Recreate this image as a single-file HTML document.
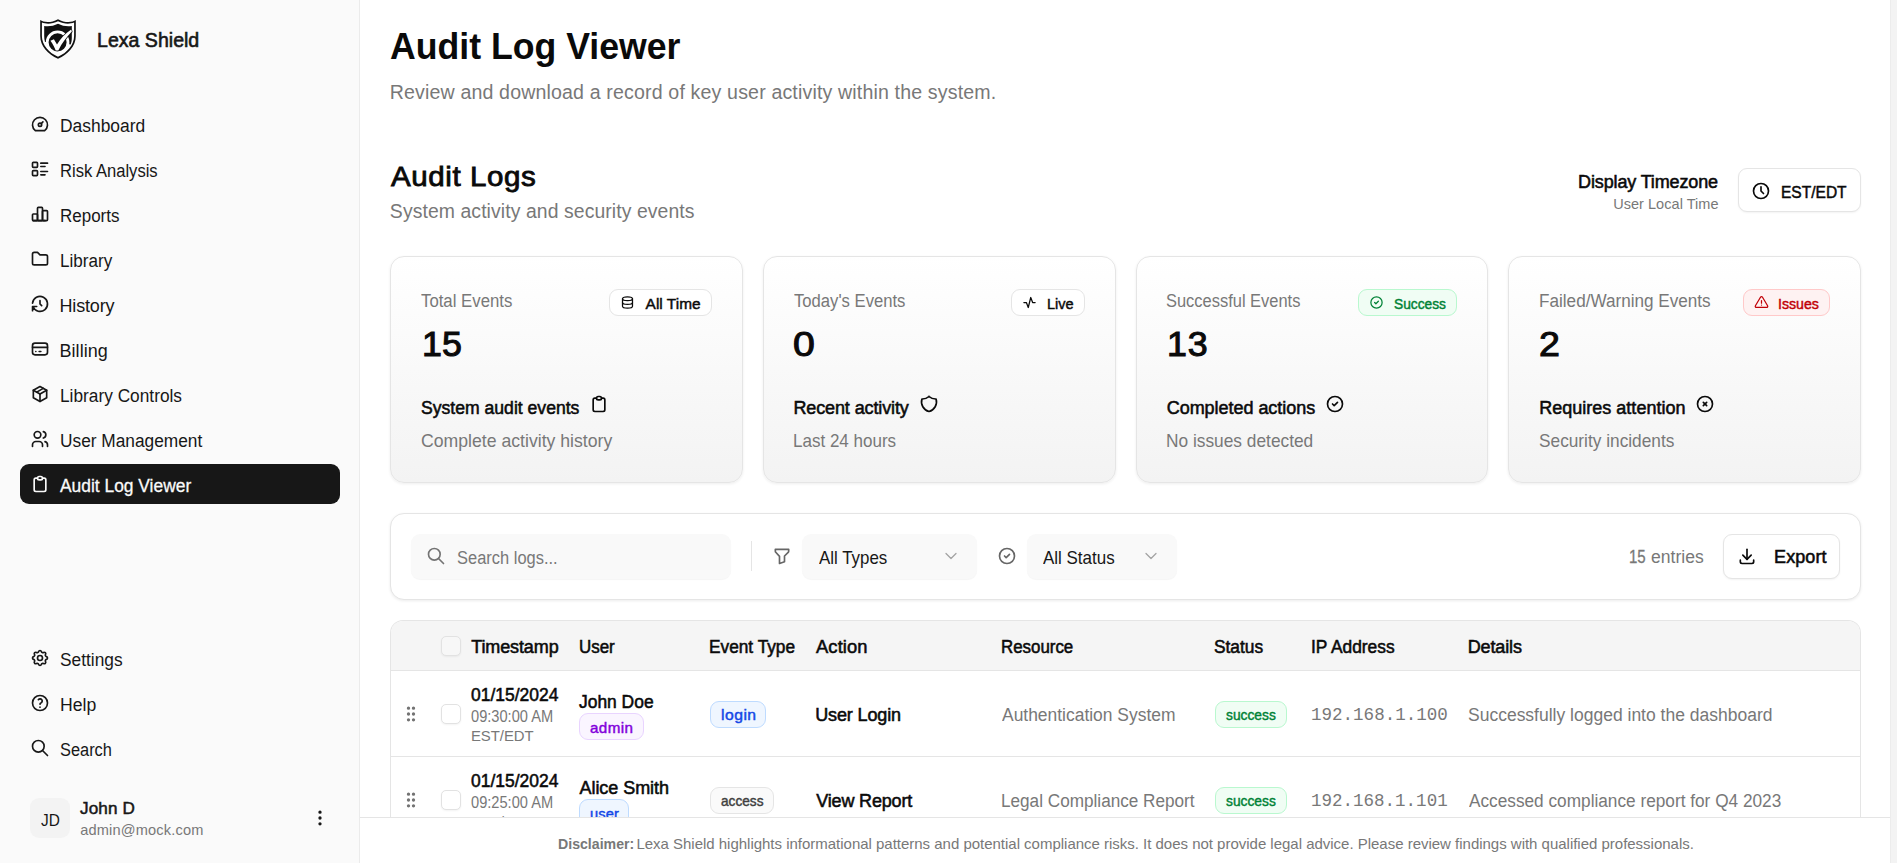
<!DOCTYPE html>
<html lang="en"><head><meta charset="utf-8"><title>Audit Log Viewer - Lexa Shield</title>
<style>
html,body{margin:0;padding:0;width:1897px;height:863px;overflow:hidden}
body{width:1897px;height:863px;overflow:hidden;background:#fff;position:relative;font-family:"Liberation Sans",sans-serif}
.bx{position:absolute;box-sizing:border-box}
.ic{position:absolute;overflow:visible}
.t{position:absolute;white-space:nowrap;transform-origin:0 0}
.side{background:#fafafa;border-right:1px solid #ebebeb;width:360px !important}
.active{background:#171717;border-radius:9px}
.avatar{background:#f3f3f3;border-radius:9px}
.btn{background:#fff;border:1px solid #e5e5e5;border-radius:9px;box-shadow:0 1px 2px rgba(0,0,0,.05)}
.card{border:1px solid #e5e5e5;border-radius:14px;background:linear-gradient(180deg,#ffffff 0%,#f3f3f3 100%);box-shadow:0 1px 3px rgba(0,0,0,.07)}
.badge{background:#fff;border:1px solid #e5e5e5;border-radius:9px}
.panel{background:#fff;border:1px solid #e5e5e5;border-radius:14px;box-shadow:0 1px 3px rgba(0,0,0,.08)}
.input{background:#f9f9f9;border-radius:9px;box-shadow:0 1px 1px rgba(0,0,0,.04)}
.table{border:1px solid #e5e5e5;border-bottom:0;border-radius:13px 13px 0 0;overflow:hidden;background:#fff}
.thead{position:absolute;left:0;top:0;right:0;background:#f5f5f5;border-bottom:1px solid #e5e5e5}
.trow{position:absolute;left:0;right:0;height:1px;background:#e5e5e5}
.cb{background:#fff;border:1px solid #e2e2e2;border-radius:5px;box-shadow:0 1px 2px rgba(0,0,0,.05)}
.foot{background:#fff;border-top:1px solid #e5e5e5}
</style></head>
<body>
<aside class="bx side" style="left:0;top:0;width:359px;height:863px"></aside>
<svg class="ic" style="left:40px;top:19px;width:36px;height:40px" viewBox="0 0 36 40">
<path d="M0.2 1.1 C3.5 3.4 11 4.2 18 0.2 C25 4.2 32.5 3.4 35.8 1.1 L35.8 17 C35.8 27 28 35.5 18 39.8 C8 35.5 0.2 27 0.2 17 Z" fill="#111"/>
<path d="M1.9 3.6 C6 5.3 12.5 5.2 18 2.3 C23.5 5.2 30 5.3 34.1 3.6 L34.1 17 C34.1 26 27 33.8 18 37.8 C9 33.8 1.9 26 1.9 17 Z" fill="#fff"/>
<path d="M4.2 6.9 C8.5 7.6 13.5 7 18 4.7 C22.5 7 27.5 7.6 31.8 6.9 L31.8 19 C31.8 21.5 31.4 23.6 30.6 25.6 L17.6 23.3 L5 23 C4.4 21 4.2 19 4.2 17 Z" fill="#111"/>
<circle cx="17.6" cy="23.3" r="10" fill="#111"/>
<circle cx="17.6" cy="23.3" r="10.4" fill="none" stroke="#fff" stroke-width="2.8"/>
<path d="M10.4 21.7 L13.9 20.3 L17.0 25.6 C20.5 19.6 25.2 14.6 31.2 10.6 L31.8 12.6 C26.6 17.9 22.0 24.1 18.3 31.5 L15.7 31.5 C14.4 27.9 12.7 24.7 10.4 21.7 Z" fill="#fff" stroke="#111" stroke-width="1.5" paint-order="stroke" stroke-linejoin="round"/>
</svg>
<svg class="ic" style="left:30.00px;top:113.80px;width:20px;height:20px;color:#171717;" viewBox="0 0 24 24" fill="none" stroke="currentColor" stroke-width="2" stroke-linecap="round" stroke-linejoin="round"><path d="M12 13m-2 0a2 2 0 1 0 4 0a2 2 0 1 0 -4 0"/><path d="M13.45 11.55l2.05 -2.05"/><path d="M6.4 20a9 9 0 1 1 11.2 0z"/></svg>
<svg class="ic" style="left:30.00px;top:158.80px;width:20px;height:20px;color:#171717;" viewBox="0 0 24 24" fill="none" stroke="currentColor" stroke-width="2" stroke-linecap="round" stroke-linejoin="round"><path d="M13 5h8"/><path d="M13 9h5"/><path d="M13 15h8"/><path d="M13 19h5"/><path d="M3 5a1 1 0 0 1 1 -1h4a1 1 0 0 1 1 1v4a1 1 0 0 1 -1 1h-4a1 1 0 0 1 -1 -1z"/><path d="M3 15a1 1 0 0 1 1 -1h4a1 1 0 0 1 1 1v4a1 1 0 0 1 -1 1h-4a1 1 0 0 1 -1 -1z"/></svg>
<svg class="ic" style="left:30.00px;top:203.80px;width:20px;height:20px;color:#171717;" viewBox="0 0 24 24" fill="none" stroke="currentColor" stroke-width="2" stroke-linecap="round" stroke-linejoin="round"><path d="M3 13a1 1 0 0 1 1 -1h4a1 1 0 0 1 1 1v6a1 1 0 0 1 -1 1h-4a1 1 0 0 1 -1 -1z"/><path d="M15 9a1 1 0 0 1 1 -1h4a1 1 0 0 1 1 1v10a1 1 0 0 1 -1 1h-4a1 1 0 0 1 -1 -1z"/><path d="M9 5a1 1 0 0 1 1 -1h4a1 1 0 0 1 1 1v14a1 1 0 0 1 -1 1h-4a1 1 0 0 1 -1 -1z"/><path d="M4 20h14"/></svg>
<svg class="ic" style="left:30.00px;top:248.80px;width:20px;height:20px;color:#171717;" viewBox="0 0 24 24" fill="none" stroke="currentColor" stroke-width="2" stroke-linecap="round" stroke-linejoin="round"><path d="M5 4h4l3 3h7a2 2 0 0 1 2 2v8a2 2 0 0 1 -2 2h-14a2 2 0 0 1 -2 -2v-11a2 2 0 0 1 2 -2"/></svg>
<svg class="ic" style="left:30.00px;top:293.80px;width:20px;height:20px;color:#171717;" viewBox="0 0 24 24" fill="none" stroke="currentColor" stroke-width="2" stroke-linecap="round" stroke-linejoin="round"><path d="M12 8l0 4l2 2"/><path d="M3.05 11a9 9 0 1 1 .5 4m-.5 5v-5h5"/></svg>
<svg class="ic" style="left:30.00px;top:338.80px;width:20px;height:20px;color:#171717;" viewBox="0 0 24 24" fill="none" stroke="currentColor" stroke-width="2" stroke-linecap="round" stroke-linejoin="round"><path d="M3 8a3 3 0 0 1 3 -3h12a3 3 0 0 1 3 3v8a3 3 0 0 1 -3 3h-12a3 3 0 0 1 -3 -3z"/><path d="M3 10l18 0"/><path d="M7 15l.01 0"/><path d="M11 15l2 0"/></svg>
<svg class="ic" style="left:30.00px;top:383.80px;width:20px;height:20px;color:#171717;" viewBox="0 0 24 24" fill="none" stroke="currentColor" stroke-width="2" stroke-linecap="round" stroke-linejoin="round"><path d="M12 3l8 4.5l0 9l-8 4.5l-8 -4.5l0 -9l8 -4.5"/><path d="M12 12l8 -4.5"/><path d="M12 12l0 9"/><path d="M12 12l-8 -4.5"/><path d="M16 5.25l-8 4.5"/></svg>
<svg class="ic" style="left:30.00px;top:428.80px;width:20px;height:20px;color:#171717;" viewBox="0 0 24 24" fill="none" stroke="currentColor" stroke-width="2" stroke-linecap="round" stroke-linejoin="round"><path d="M9 7m-4 0a4 4 0 1 0 8 0a4 4 0 1 0 -8 0"/><path d="M3 21v-2a4 4 0 0 1 4 -4h4a4 4 0 0 1 4 4v2"/><path d="M16 3.13a4 4 0 0 1 0 7.75"/><path d="M21 21v-2a4 4 0 0 0 -3 -3.85"/></svg>
<div class="bx active" style="left:20px;top:464px;width:320px;height:40px;"></div>
<svg class="ic" style="left:30.00px;top:473.80px;width:20px;height:20px;color:#fafafa;" viewBox="0 0 24 24" fill="none" stroke="currentColor" stroke-width="2" stroke-linecap="round" stroke-linejoin="round"><path d="M9 5h-2a2 2 0 0 0 -2 2v12a2 2 0 0 0 2 2h10a2 2 0 0 0 2 -2v-12a2 2 0 0 0 -2 -2h-2"/><path d="M9 5a2 2 0 0 1 2 -2h2a2 2 0 0 1 2 2v0a2 2 0 0 1 -2 2h-2a2 2 0 0 1 -2 -2z"/></svg>
<svg class="ic" style="left:30.00px;top:647.80px;width:20px;height:20px;color:#171717;" viewBox="0 0 24 24" fill="none" stroke="currentColor" stroke-width="2" stroke-linecap="round" stroke-linejoin="round"><path d="M10.325 4.317c.426 -1.756 2.924 -1.756 3.35 0a1.724 1.724 0 0 0 2.573 1.066c1.543 -.94 3.31 .826 2.37 2.37a1.724 1.724 0 0 0 1.065 2.572c1.756 .426 1.756 2.924 0 3.35a1.724 1.724 0 0 0 -1.066 2.573c.94 1.543 -.826 3.31 -2.37 2.37a1.724 1.724 0 0 0 -2.572 1.065c-.426 1.756 -2.924 1.756 -3.35 0a1.724 1.724 0 0 0 -2.573 -1.066c-1.543 .94 -3.31 -.826 -2.37 -2.37a1.724 1.724 0 0 0 -1.065 -2.572c-1.756 -.426 -1.756 -2.924 0 -3.35a1.724 1.724 0 0 0 1.066 -2.573c-.94 -1.543 .826 -3.31 2.37 -2.37c1 .608 2.296 .07 2.572 -1.065z"/><path d="M9 12a3 3 0 1 0 6 0a3 3 0 0 0 -6 0"/></svg>
<svg class="ic" style="left:30.00px;top:692.80px;width:20px;height:20px;color:#171717;" viewBox="0 0 24 24" fill="none" stroke="currentColor" stroke-width="2" stroke-linecap="round" stroke-linejoin="round"><path d="M3 12a9 9 0 1 0 18 0a9 9 0 1 0 -18 0"/><path d="M12 17l0 .01"/><path d="M12 13.5a1.5 1.5 0 0 1 1 -1.5a2.6 2.6 0 1 0 -3 -4"/></svg>
<svg class="ic" style="left:30.00px;top:737.80px;width:20px;height:20px;color:#171717;" viewBox="0 0 24 24" fill="none" stroke="currentColor" stroke-width="2" stroke-linecap="round" stroke-linejoin="round"><path d="M10 10m-7 0a7 7 0 1 0 14 0a7 7 0 1 0 -14 0"/><path d="M21 21l-6 -6"/></svg>
<div class="bx avatar" style="left:30px;top:798px;width:40px;height:40px;"></div>
<svg class="ic" style="left:309.50px;top:808.20px;width:20px;height:20px;color:#171717;" viewBox="0 0 24 24" fill="none" stroke="currentColor" stroke-width="2" stroke-linecap="round" stroke-linejoin="round"><path d="M12 12m-1 0a1 1 0 1 0 2 0a1 1 0 1 0 -2 0"/><path d="M12 19m-1 0a1 1 0 1 0 2 0a1 1 0 1 0 -2 0"/><path d="M12 5m-1 0a1 1 0 1 0 2 0a1 1 0 1 0 -2 0"/></svg>
<div class="bx btn" style="left:1738px;top:168px;width:123px;height:44px;"></div>
<svg class="ic" style="left:1751.00px;top:180.70px;width:20px;height:20px;color:#0a0a0a;" viewBox="0 0 24 24" fill="none" stroke="currentColor" stroke-width="2" stroke-linecap="round" stroke-linejoin="round"><path d="M3 12a9 9 0 1 0 18 0a9 9 0 0 0 -18 0"/><path d="M12 7v5l3 3"/></svg>
<div class="bx card" style="left:390px;top:256px;width:353px;height:227px;"></div>
<div class="bx card" style="left:763px;top:256px;width:353px;height:227px;"></div>
<div class="bx card" style="left:1136px;top:256px;width:352px;height:227px;"></div>
<div class="bx card" style="left:1508px;top:256px;width:353px;height:227px;"></div>
<div class="bx badge" style="left:609px;top:289px;width:103px;height:27px;"></div>
<svg class="ic" style="left:620.00px;top:294.90px;width:15px;height:15px;color:#0a0a0a;" viewBox="0 0 24 24" fill="none" stroke="currentColor" stroke-width="2" stroke-linecap="round" stroke-linejoin="round"><path d="M4 6a8 3 0 1 0 16 0a8 3 0 1 0 -16 0"/><path d="M4 6v6a8 3 0 0 0 16 0v-6"/><path d="M4 12v6a8 3 0 0 0 16 0v-6"/></svg>
<div class="bx badge" style="left:1011px;top:289px;width:74px;height:27px;"></div>
<svg class="ic" style="left:1022.10px;top:294.90px;width:15px;height:15px;color:#0a0a0a;" viewBox="0 0 24 24" fill="none" stroke="currentColor" stroke-width="2" stroke-linecap="round" stroke-linejoin="round"><path d="M3 12h4l3 8l4 -16l3 8h4"/></svg>
<div class="bx badge" style="left:1358px;top:289px;width:99px;height:27px;background:#f0fdf4;border-color:#b9f8cf"></div>
<svg class="ic" style="left:1369.00px;top:294.90px;width:15px;height:15px;color:#008236;" viewBox="0 0 24 24" fill="none" stroke="currentColor" stroke-width="2" stroke-linecap="round" stroke-linejoin="round"><path d="M12 12m-9 0a9 9 0 1 0 18 0a9 9 0 1 0 -18 0"/><path d="M9 12l2 2l4 -4"/></svg>
<div class="bx badge" style="left:1743px;top:289px;width:87px;height:27px;background:#fef2f2;border-color:#ffc9c9"></div>
<svg class="ic" style="left:1753.90px;top:294.80px;width:15px;height:15px;color:#c10007;" viewBox="0 0 24 24" fill="none" stroke="currentColor" stroke-width="2" stroke-linecap="round" stroke-linejoin="round"><path d="M12 9v4"/><path d="M10.363 3.591l-8.106 13.534a1.914 1.914 0 0 0 1.636 2.871h16.214a1.914 1.914 0 0 0 1.636 -2.87l-8.106 -13.536a1.914 1.914 0 0 0 -3.274 0z"/><path d="M12 16h.01"/></svg>
<svg class="ic" style="left:589.15px;top:393.85px;width:20px;height:20px;color:#0a0a0a;" viewBox="0 0 24 24" fill="none" stroke="currentColor" stroke-width="2" stroke-linecap="round" stroke-linejoin="round"><path d="M9 5h-2a2 2 0 0 0 -2 2v12a2 2 0 0 0 2 2h10a2 2 0 0 0 2 -2v-12a2 2 0 0 0 -2 -2h-2"/><path d="M9 5a2 2 0 0 1 2 -2h2a2 2 0 0 1 2 2v0a2 2 0 0 1 -2 2h-2a2 2 0 0 1 -2 -2z"/></svg>
<svg class="ic" style="left:919.15px;top:393.85px;width:20px;height:20px;color:#0a0a0a;" viewBox="0 0 24 24" fill="none" stroke="currentColor" stroke-width="2" stroke-linecap="round" stroke-linejoin="round"><path d="M12 3a12 12 0 0 0 8.5 3a12 12 0 0 1 -8.5 15a12 12 0 0 1 -8.5 -15a12 12 0 0 0 8.5 -3"/></svg>
<svg class="ic" style="left:1325.25px;top:394.10px;width:20px;height:20px;color:#0a0a0a;" viewBox="0 0 24 24" fill="none" stroke="currentColor" stroke-width="2" stroke-linecap="round" stroke-linejoin="round"><path d="M12 12m-9 0a9 9 0 1 0 18 0a9 9 0 1 0 -18 0"/><path d="M9 12l2 2l4 -4"/></svg>
<svg class="ic" style="left:1695.05px;top:394.10px;width:20px;height:20px;color:#0a0a0a;" viewBox="0 0 24 24" fill="none" stroke="currentColor" stroke-width="2" stroke-linecap="round" stroke-linejoin="round"><path d="M12 12m-9 0a9 9 0 1 0 18 0a9 9 0 1 0 -18 0"/><path d="M10 10l4 4m0 -4l-4 4"/></svg>
<div class="bx panel" style="left:390px;top:513px;width:1471px;height:87px;"></div>
<div class="bx input" style="left:411px;top:534px;width:320px;height:45px;"></div>
<svg class="ic" style="left:425.90px;top:546.20px;width:20px;height:20px;color:#737373;" viewBox="0 0 24 24" fill="none" stroke="currentColor" stroke-width="2" stroke-linecap="round" stroke-linejoin="round"><path d="M10 10m-7 0a7 7 0 1 0 14 0a7 7 0 1 0 -14 0"/><path d="M21 21l-6 -6"/></svg>
<div class="bx " style="left:751px;top:541px;width:1px;height:30px;background:#e5e5e5"></div>
<svg class="ic" style="left:771.60px;top:546.20px;width:20px;height:20px;color:#666;" viewBox="0 0 24 24" fill="none" stroke="currentColor" stroke-width="2" stroke-linecap="round" stroke-linejoin="round"><path d="M4 4h16v2.172a2 2 0 0 1 -.586 1.414l-4.414 4.414v7l-6 2v-8.5l-4.48 -4.928a2 2 0 0 1 -.52 -1.345v-2.227z"/></svg>
<div class="bx input" style="left:802px;top:534px;width:175px;height:45px;"></div>
<svg class="ic" style="left:941.30px;top:546.00px;width:20px;height:20px;color:#a3a3a3;" viewBox="0 0 24 24" fill="none" stroke="currentColor" stroke-width="1.5" stroke-linecap="round" stroke-linejoin="round"><path d="M6 9l6 6l6 -6"/></svg>
<svg class="ic" style="left:997.00px;top:546.10px;width:20px;height:20px;color:#666;" viewBox="0 0 24 24" fill="none" stroke="currentColor" stroke-width="2" stroke-linecap="round" stroke-linejoin="round"><path d="M12 12m-9 0a9 9 0 1 0 18 0a9 9 0 1 0 -18 0"/><path d="M9 12l2 2l4 -4"/></svg>
<div class="bx input" style="left:1027px;top:534px;width:150px;height:45px;"></div>
<svg class="ic" style="left:1141.30px;top:546.00px;width:20px;height:20px;color:#a3a3a3;" viewBox="0 0 24 24" fill="none" stroke="currentColor" stroke-width="1.5" stroke-linecap="round" stroke-linejoin="round"><path d="M6 9l6 6l6 -6"/></svg>
<div class="bx btn" style="left:1723px;top:534px;width:117px;height:45px;"></div>
<svg class="ic" style="left:1737.00px;top:546.40px;width:20px;height:20px;color:#0a0a0a;" viewBox="0 0 24 24" fill="none" stroke="currentColor" stroke-width="2" stroke-linecap="round" stroke-linejoin="round"><path d="M4 17v2a2 2 0 0 0 2 2h12a2 2 0 0 0 2 -2v-2"/><path d="M7 11l5 5l5 -5"/><path d="M12 4l0 12"/></svg>
<div class="bx table" style="left:390px;top:620px;width:1471px;height:243px"><div class="thead" style="height:49px"></div><div class="trow" style="top:135px"></div></div>
<div class="bx cb" style="left:441px;top:636px;width:20px;height:20px;background:#f7f7f7"></div>
<svg class="ic" style="left:401.10px;top:704.00px;width:20px;height:20px;color:#737373;" viewBox="0 0 24 24" fill="none" stroke="currentColor" stroke-width="2" stroke-linecap="round" stroke-linejoin="round"><path d="M9 5m-1 0a1 1 0 1 0 2 0a1 1 0 1 0 -2 0"/><path d="M9 12m-1 0a1 1 0 1 0 2 0a1 1 0 1 0 -2 0"/><path d="M9 19m-1 0a1 1 0 1 0 2 0a1 1 0 1 0 -2 0"/><path d="M15 5m-1 0a1 1 0 1 0 2 0a1 1 0 1 0 -2 0"/><path d="M15 12m-1 0a1 1 0 1 0 2 0a1 1 0 1 0 -2 0"/><path d="M15 19m-1 0a1 1 0 1 0 2 0a1 1 0 1 0 -2 0"/></svg>
<div class="bx cb" style="left:441px;top:704px;width:20px;height:20px;"></div>
<svg class="ic" style="left:401.10px;top:790.00px;width:20px;height:20px;color:#737373;" viewBox="0 0 24 24" fill="none" stroke="currentColor" stroke-width="2" stroke-linecap="round" stroke-linejoin="round"><path d="M9 5m-1 0a1 1 0 1 0 2 0a1 1 0 1 0 -2 0"/><path d="M9 12m-1 0a1 1 0 1 0 2 0a1 1 0 1 0 -2 0"/><path d="M9 19m-1 0a1 1 0 1 0 2 0a1 1 0 1 0 -2 0"/><path d="M15 5m-1 0a1 1 0 1 0 2 0a1 1 0 1 0 -2 0"/><path d="M15 12m-1 0a1 1 0 1 0 2 0a1 1 0 1 0 -2 0"/><path d="M15 19m-1 0a1 1 0 1 0 2 0a1 1 0 1 0 -2 0"/></svg>
<div class="bx cb" style="left:441px;top:790px;width:20px;height:20px;"></div>
<div class="bx badge" style="left:579px;top:713px;width:65px;height:27px;background:#faf5ff;border-color:#e9d4ff"></div>
<div class="bx badge" style="left:710px;top:701px;width:56px;height:27px;background:#eff6ff;border-color:#bedbff"></div>
<div class="bx badge" style="left:1215px;top:701px;width:72px;height:27px;background:#f0fdf4;border-color:#b9f8cf"></div>
<div class="bx badge" style="left:579px;top:799px;width:50px;height:27px;background:#eff6ff;border-color:#bedbff"></div>
<div class="bx badge" style="left:710px;top:787px;width:64px;height:27px;background:#fafafa;border-color:#e5e5e5"></div>
<div class="bx badge" style="left:1215px;top:787px;width:72px;height:27px;background:#f0fdf4;border-color:#b9f8cf"></div>
<span class="t" style="left:97.14px;top:29.75px;color:#171717;font-family:'Liberation Sans', sans-serif;font-size:20px;line-height:20px;font-weight:400;-webkit-text-stroke:0.60px currentColor;transform:scaleX(0.9781);">Lexa Shield</span>
<span class="t" style="left:59.56px;top:116.75px;color:#171717;font-family:'Liberation Sans', sans-serif;font-size:18px;line-height:18px;font-weight:400;transform:scaleX(0.9681);">Dashboard</span>
<span class="t" style="left:59.62px;top:161.75px;color:#171717;font-family:'Liberation Sans', sans-serif;font-size:18px;line-height:18px;font-weight:400;transform:scaleX(0.9210);">Risk Analysis</span>
<span class="t" style="left:59.59px;top:206.75px;color:#171717;font-family:'Liberation Sans', sans-serif;font-size:18px;line-height:18px;font-weight:400;transform:scaleX(0.9430);">Reports</span>
<span class="t" style="left:59.59px;top:251.75px;color:#171717;font-family:'Liberation Sans', sans-serif;font-size:18px;line-height:18px;font-weight:400;transform:scaleX(0.9493);">Library</span>
<span class="t" style="left:59.52px;top:296.75px;color:#171717;font-family:'Liberation Sans', sans-serif;font-size:18px;line-height:18px;font-weight:400;letter-spacing:-0.162px;">History</span>
<span class="t" style="left:59.52px;top:341.75px;color:#171717;font-family:'Liberation Sans', sans-serif;font-size:18px;line-height:18px;font-weight:400;letter-spacing:0.044px;">Billing</span>
<span class="t" style="left:59.57px;top:386.75px;color:#171717;font-family:'Liberation Sans', sans-serif;font-size:18px;line-height:18px;font-weight:400;transform:scaleX(0.9601);">Library Controls</span>
<span class="t" style="left:59.61px;top:431.75px;color:#171717;font-family:'Liberation Sans', sans-serif;font-size:18px;line-height:18px;font-weight:400;transform:scaleX(0.9609);">User Management</span>
<span class="t" style="left:59.95px;top:476.75px;color:#fafafa;font-family:'Liberation Sans', sans-serif;font-size:18px;line-height:18px;font-weight:400;-webkit-text-stroke:0.29px currentColor;transform:scaleX(0.9663);">Audit Log Viewer</span>
<span class="t" style="left:59.74px;top:650.75px;color:#171717;font-family:'Liberation Sans', sans-serif;font-size:18px;line-height:18px;font-weight:400;transform:scaleX(0.9618);">Settings</span>
<span class="t" style="left:59.55px;top:695.75px;color:#171717;font-family:'Liberation Sans', sans-serif;font-size:18px;line-height:18px;font-weight:400;transform:scaleX(0.9800);">Help</span>
<span class="t" style="left:59.80px;top:740.75px;color:#171717;font-family:'Liberation Sans', sans-serif;font-size:18px;line-height:18px;font-weight:400;transform:scaleX(0.9104);">Search</span>
<span class="t" style="left:40.56px;top:811.75px;color:#171717;font-family:'Liberation Sans', sans-serif;font-size:17.4px;line-height:17.4px;font-weight:400;transform:scaleX(0.8865);">JD</span>
<span class="t" style="left:80.43px;top:801.00px;color:#171717;font-family:'Liberation Sans', sans-serif;font-size:16.8px;line-height:16.8px;font-weight:400;-webkit-text-stroke:0.50px currentColor;letter-spacing:0.136px;transform:scaleX(1.0197);">John D</span>
<span class="t" style="left:80.18px;top:822.53px;color:#787878;font-family:'Liberation Sans', sans-serif;font-size:14.6px;line-height:14.6px;font-weight:400;letter-spacing:0.165px;">admin@mock.com</span>
<span class="t" style="left:389.99px;top:27.70px;color:#0a0a0a;font-family:'Liberation Sans', sans-serif;font-size:37.3px;line-height:37.3px;font-weight:700;transform:scaleX(0.9556);">Audit Log Viewer</span>
<span class="t" style="left:389.70px;top:83.20px;color:#787878;font-family:'Liberation Sans', sans-serif;font-size:19.6px;line-height:19.6px;font-weight:400;letter-spacing:0.145px;">Review and download a record of key user activity within the system.</span>
<span class="t" style="left:391.00px;top:163.40px;color:#0a0a0a;font-family:'Liberation Sans', sans-serif;font-size:27.8px;line-height:27.8px;font-weight:400;-webkit-text-stroke:0.83px currentColor;letter-spacing:0.563px;transform:scaleX(1.0616);">Audit Logs</span>
<span class="t" style="left:389.86px;top:202.10px;color:#787878;font-family:'Liberation Sans', sans-serif;font-size:19.4px;line-height:19.4px;font-weight:400;letter-spacing:0.086px;">System activity and security events</span>
<span class="t" style="left:1578.11px;top:172.90px;color:#0a0a0a;font-family:'Liberation Sans', sans-serif;font-size:18.0px;line-height:18.0px;font-weight:400;-webkit-text-stroke:0.54px currentColor;letter-spacing:-0.142px;">Display Timezone</span>
<span class="t" style="left:1613.13px;top:196.82px;color:#787878;font-family:'Liberation Sans', sans-serif;font-size:14.5px;line-height:14.5px;font-weight:400;letter-spacing:0.048px;">User Local Time</span>
<span class="t" style="left:1781.04px;top:184.20px;color:#0a0a0a;font-family:'Liberation Sans', sans-serif;font-size:17.4px;line-height:17.4px;font-weight:400;-webkit-text-stroke:0.52px currentColor;transform:scaleX(0.8935);">EST/EDT</span>
<span class="t" style="left:421.12px;top:292.00px;color:#787878;font-family:'Liberation Sans', sans-serif;font-size:18.8px;line-height:18.8px;font-weight:400;transform:scaleX(0.8927);">Total Events</span>
<span class="t" style="left:421.92px;top:326.60px;color:#0a0a0a;font-family:'Liberation Sans', sans-serif;font-size:35.8px;line-height:35.8px;font-weight:400;-webkit-text-stroke:1.07px currentColor;letter-spacing:0.096px;">15</span>
<span class="t" style="left:420.72px;top:398.60px;color:#0a0a0a;font-family:'Liberation Sans', sans-serif;font-size:18.0px;line-height:18.0px;font-weight:400;-webkit-text-stroke:0.54px currentColor;transform:scaleX(0.9773);">System audit events</span>
<span class="t" style="left:420.73px;top:432.00px;color:#787878;font-family:'Liberation Sans', sans-serif;font-size:18.4px;line-height:18.4px;font-weight:400;transform:scaleX(0.9596);">Complete activity history</span>
<span class="t" style="left:793.92px;top:292.00px;color:#787878;font-family:'Liberation Sans', sans-serif;font-size:18.8px;line-height:18.8px;font-weight:400;transform:scaleX(0.8863);">Today's Events</span>
<span class="t" style="left:793.41px;top:326.60px;color:#0a0a0a;font-family:'Liberation Sans', sans-serif;font-size:35.8px;line-height:35.8px;font-weight:400;-webkit-text-stroke:1.07px currentColor;transform:scaleX(1.0944);">0</span>
<span class="t" style="left:793.41px;top:398.60px;color:#0a0a0a;font-family:'Liberation Sans', sans-serif;font-size:18.0px;line-height:18.0px;font-weight:400;-webkit-text-stroke:0.54px currentColor;letter-spacing:-0.115px;">Recent activity</span>
<span class="t" style="left:793.35px;top:432.00px;color:#787878;font-family:'Liberation Sans', sans-serif;font-size:18.4px;line-height:18.4px;font-weight:400;transform:scaleX(0.9253);">Last 24 hours</span>
<span class="t" style="left:1165.67px;top:292.00px;color:#787878;font-family:'Liberation Sans', sans-serif;font-size:18.8px;line-height:18.8px;font-weight:400;transform:scaleX(0.8759);">Successful Events</span>
<span class="t" style="left:1167.12px;top:326.60px;color:#0a0a0a;font-family:'Liberation Sans', sans-serif;font-size:35.8px;line-height:35.8px;font-weight:400;-webkit-text-stroke:1.07px currentColor;letter-spacing:0.618px;">13</span>
<span class="t" style="left:1166.69px;top:398.60px;color:#0a0a0a;font-family:'Liberation Sans', sans-serif;font-size:18.0px;line-height:18.0px;font-weight:400;-webkit-text-stroke:0.54px currentColor;letter-spacing:-0.035px;">Completed actions</span>
<span class="t" style="left:1165.83px;top:432.00px;color:#787878;font-family:'Liberation Sans', sans-serif;font-size:18.4px;line-height:18.4px;font-weight:400;transform:scaleX(0.9414);">No issues detected</span>
<span class="t" style="left:1538.75px;top:292.00px;color:#787878;font-family:'Liberation Sans', sans-serif;font-size:18.8px;line-height:18.8px;font-weight:400;transform:scaleX(0.9120);">Failed/Warning Events</span>
<span class="t" style="left:1539.15px;top:326.60px;color:#0a0a0a;font-family:'Liberation Sans', sans-serif;font-size:35.8px;line-height:35.8px;font-weight:400;-webkit-text-stroke:1.07px currentColor;transform:scaleX(1.0497);">2</span>
<span class="t" style="left:1539.21px;top:398.60px;color:#0a0a0a;font-family:'Liberation Sans', sans-serif;font-size:18.0px;line-height:18.0px;font-weight:400;-webkit-text-stroke:0.54px currentColor;letter-spacing:0.011px;">Requires attention</span>
<span class="t" style="left:1539.31px;top:432.00px;color:#787878;font-family:'Liberation Sans', sans-serif;font-size:18.4px;line-height:18.4px;font-weight:400;transform:scaleX(0.9392);">Security incidents</span>
<span class="t" style="left:645.57px;top:296.00px;color:#0a0a0a;font-family:'Liberation Sans', sans-serif;font-size:15.4px;line-height:15.4px;font-weight:400;-webkit-text-stroke:0.46px currentColor;letter-spacing:0.052px;">All Time</span>
<span class="t" style="left:1046.62px;top:296.00px;color:#0a0a0a;font-family:'Liberation Sans', sans-serif;font-size:15.4px;line-height:15.4px;font-weight:400;-webkit-text-stroke:0.46px currentColor;transform:scaleX(0.9433);">Live</span>
<span class="t" style="left:1394.25px;top:296.00px;color:#008236;font-family:'Liberation Sans', sans-serif;font-size:15.4px;line-height:15.4px;font-weight:400;-webkit-text-stroke:0.46px currentColor;transform:scaleX(0.8932);">Success</span>
<span class="t" style="left:1778.00px;top:296.00px;color:#c10007;font-family:'Liberation Sans', sans-serif;font-size:15.4px;line-height:15.4px;font-weight:400;-webkit-text-stroke:0.46px currentColor;transform:scaleX(0.9206);">Issues</span>
<span class="t" style="left:456.64px;top:548.70px;color:#787878;font-family:'Liberation Sans', sans-serif;font-size:18px;line-height:18px;font-weight:400;transform:scaleX(0.9145);">Search logs...</span>
<span class="t" style="left:818.59px;top:549.00px;color:#171717;font-family:'Liberation Sans', sans-serif;font-size:18.4px;line-height:18.4px;font-weight:400;transform:scaleX(0.9185);">All Types</span>
<span class="t" style="left:1043.39px;top:549.00px;color:#171717;font-family:'Liberation Sans', sans-serif;font-size:18.4px;line-height:18.4px;font-weight:400;transform:scaleX(0.9222);">All Status</span>
<span class="t" style="left:1629.28px;top:548.40px;color:#787878;font-family:'Liberation Sans', sans-serif;font-size:18.0px;line-height:18.0px;font-weight:400;-webkit-text-stroke:0.29px currentColor;transform:scaleX(0.8359);">15</span>
<span class="t" style="left:1650.63px;top:548.40px;color:#787878;font-family:'Liberation Sans', sans-serif;font-size:18.0px;line-height:18.0px;font-weight:400;transform:scaleX(0.9748);">entries</span>
<span class="t" style="left:1774.11px;top:548.40px;color:#0a0a0a;font-family:'Liberation Sans', sans-serif;font-size:18.0px;line-height:18.0px;font-weight:400;-webkit-text-stroke:0.54px currentColor;letter-spacing:0.078px;">Export</span>
<span class="t" style="left:471.18px;top:637.75px;color:#0a0a0a;font-family:'Liberation Sans', sans-serif;font-size:18.0px;line-height:18.0px;font-weight:400;-webkit-text-stroke:0.54px currentColor;letter-spacing:-0.106px;">Timestamp</span>
<span class="t" style="left:578.50px;top:637.75px;color:#0a0a0a;font-family:'Liberation Sans', sans-serif;font-size:18.0px;line-height:18.0px;font-weight:400;-webkit-text-stroke:0.54px currentColor;transform:scaleX(0.9410);">User</span>
<span class="t" style="left:708.96px;top:637.75px;color:#0a0a0a;font-family:'Liberation Sans', sans-serif;font-size:18.0px;line-height:18.0px;font-weight:400;-webkit-text-stroke:0.54px currentColor;transform:scaleX(0.9593);">Event Type</span>
<span class="t" style="left:816.23px;top:637.75px;color:#0a0a0a;font-family:'Liberation Sans', sans-serif;font-size:18.0px;line-height:18.0px;font-weight:400;-webkit-text-stroke:0.54px currentColor;letter-spacing:0.119px;transform:scaleX(1.0186);">Action</span>
<span class="t" style="left:1000.98px;top:637.75px;color:#0a0a0a;font-family:'Liberation Sans', sans-serif;font-size:18.0px;line-height:18.0px;font-weight:400;-webkit-text-stroke:0.54px currentColor;transform:scaleX(0.9376);">Resource</span>
<span class="t" style="left:1214.03px;top:637.75px;color:#0a0a0a;font-family:'Liberation Sans', sans-serif;font-size:18.0px;line-height:18.0px;font-weight:400;-webkit-text-stroke:0.54px currentColor;transform:scaleX(0.9627);">Status</span>
<span class="t" style="left:1311.38px;top:637.75px;color:#0a0a0a;font-family:'Liberation Sans', sans-serif;font-size:18.0px;line-height:18.0px;font-weight:400;-webkit-text-stroke:0.54px currentColor;transform:scaleX(0.9638);">IP Address</span>
<span class="t" style="left:1467.66px;top:637.75px;color:#0a0a0a;font-family:'Liberation Sans', sans-serif;font-size:18.0px;line-height:18.0px;font-weight:400;-webkit-text-stroke:0.54px currentColor;letter-spacing:-0.129px;">Details</span>
<span class="t" style="left:471.05px;top:685.75px;color:#0a0a0a;font-family:'Liberation Sans', sans-serif;font-size:18.0px;line-height:18.0px;font-weight:400;-webkit-text-stroke:0.54px currentColor;transform:scaleX(0.9695);">01/15/2024</span>
<span class="t" style="left:471.31px;top:709.00px;color:#787878;font-family:'Liberation Sans', sans-serif;font-size:15.9px;line-height:15.9px;font-weight:400;transform:scaleX(0.9204);">09:30:00 AM</span>
<span class="t" style="left:470.90px;top:728.84px;color:#787878;font-family:'Liberation Sans', sans-serif;font-size:14.9px;line-height:14.9px;font-weight:400;letter-spacing:-0.020px;">EST/EDT</span>
<span class="t" style="left:579.41px;top:692.75px;color:#0a0a0a;font-family:'Liberation Sans', sans-serif;font-size:18.0px;line-height:18.0px;font-weight:400;-webkit-text-stroke:0.54px currentColor;transform:scaleX(0.9678);">John Doe</span>
<span class="t" style="left:589.78px;top:720.90px;color:#8200db;font-family:'Liberation Sans', sans-serif;font-size:14.3px;line-height:14.3px;font-weight:400;-webkit-text-stroke:0.43px currentColor;letter-spacing:0.376px;transform:scaleX(1.0622);">admin</span>
<span class="t" style="left:720.50px;top:708.00px;color:#1447e6;font-family:'Liberation Sans', sans-serif;font-size:14.3px;line-height:14.3px;font-weight:400;-webkit-text-stroke:0.43px currentColor;letter-spacing:0.433px;transform:scaleX(1.0991);">login</span>
<span class="t" style="left:815.19px;top:705.75px;color:#0a0a0a;font-family:'Liberation Sans', sans-serif;font-size:18.0px;line-height:18.0px;font-weight:400;-webkit-text-stroke:0.54px currentColor;letter-spacing:-0.132px;">User Login</span>
<span class="t" style="left:1001.88px;top:705.75px;color:#787878;font-family:'Liberation Sans', sans-serif;font-size:18.0px;line-height:18.0px;font-weight:400;transform:scaleX(0.9686);">Authentication System</span>
<span class="t" style="left:1225.59px;top:708.00px;color:#008236;font-family:'Liberation Sans', sans-serif;font-size:14.3px;line-height:14.3px;font-weight:400;-webkit-text-stroke:0.43px currentColor;transform:scaleX(0.9647);">success</span>
<span class="t" style="left:1311.40px;top:707.00px;color:#787878;font-family:'Liberation Mono', monospace;font-size:18.4px;line-height:18.4px;font-weight:400;transform:scaleX(0.9534);">192.168.1.100</span>
<span class="t" style="left:1467.73px;top:705.75px;color:#787878;font-family:'Liberation Sans', sans-serif;font-size:18.0px;line-height:18.0px;font-weight:400;transform:scaleX(0.9720);">Successfully logged into the dashboard</span>
<span class="t" style="left:471.05px;top:771.75px;color:#0a0a0a;font-family:'Liberation Sans', sans-serif;font-size:18.0px;line-height:18.0px;font-weight:400;-webkit-text-stroke:0.54px currentColor;transform:scaleX(0.9695);">01/15/2024</span>
<span class="t" style="left:471.31px;top:795.00px;color:#787878;font-family:'Liberation Sans', sans-serif;font-size:15.9px;line-height:15.9px;font-weight:400;transform:scaleX(0.9204);">09:25:00 AM</span>
<span class="t" style="left:470.90px;top:814.84px;color:#787878;font-family:'Liberation Sans', sans-serif;font-size:14.9px;line-height:14.9px;font-weight:400;letter-spacing:-0.020px;">EST/EDT</span>
<span class="t" style="left:579.48px;top:778.75px;color:#0a0a0a;font-family:'Liberation Sans', sans-serif;font-size:18.0px;line-height:18.0px;font-weight:400;-webkit-text-stroke:0.54px currentColor;letter-spacing:-0.048px;">Alice Smith</span>
<span class="t" style="left:589.68px;top:806.90px;color:#1447e6;font-family:'Liberation Sans', sans-serif;font-size:14.3px;line-height:14.3px;font-weight:400;-webkit-text-stroke:0.43px currentColor;letter-spacing:0.145px;transform:scaleX(1.0242);">user</span>
<span class="t" style="left:721.41px;top:794.00px;color:#404040;font-family:'Liberation Sans', sans-serif;font-size:14.3px;line-height:14.3px;font-weight:400;-webkit-text-stroke:0.43px currentColor;transform:scaleX(0.9547);">access</span>
<span class="t" style="left:816.23px;top:791.75px;color:#0a0a0a;font-family:'Liberation Sans', sans-serif;font-size:18.0px;line-height:18.0px;font-weight:400;-webkit-text-stroke:0.54px currentColor;letter-spacing:-0.168px;">View Report</span>
<span class="t" style="left:1000.83px;top:791.75px;color:#787878;font-family:'Liberation Sans', sans-serif;font-size:18.0px;line-height:18.0px;font-weight:400;transform:scaleX(0.9531);">Legal Compliance Report</span>
<span class="t" style="left:1225.59px;top:794.00px;color:#008236;font-family:'Liberation Sans', sans-serif;font-size:14.3px;line-height:14.3px;font-weight:400;-webkit-text-stroke:0.43px currentColor;transform:scaleX(0.9647);">success</span>
<span class="t" style="left:1311.40px;top:793.00px;color:#787878;font-family:'Liberation Mono', monospace;font-size:18.4px;line-height:18.4px;font-weight:400;transform:scaleX(0.9525);">192.168.1.101</span>
<span class="t" style="left:1468.63px;top:791.75px;color:#787878;font-family:'Liberation Sans', sans-serif;font-size:18.0px;line-height:18.0px;font-weight:400;transform:scaleX(0.9573);">Accessed compliance report for Q4 2023</span>
<footer class="bx foot" style="left:360px;top:817px;width:1530px;height:46px"></footer>
<span class="t" style="left:558.04px;top:835.90px;color:#787878;font-family:'Liberation Sans', sans-serif;font-size:15.0px;line-height:15.0px;font-weight:700;transform:scaleX(0.9426);">Disclaimer:</span>
<span class="t" style="left:636.39px;top:836.01px;color:#787878;font-family:'Liberation Sans', sans-serif;font-size:15.0px;line-height:15.0px;font-weight:400;letter-spacing:-0.014px;">Lexa Shield highlights informational patterns and potential compliance risks. It does not provide legal advice. Please review findings with qualified professionals.</span>
<div class="bx" style="left:1890px;top:0;width:7px;height:863px;background:#f3f3f3;border-left:1px solid #ececec;box-sizing:border-box"></div>
</body></html>
